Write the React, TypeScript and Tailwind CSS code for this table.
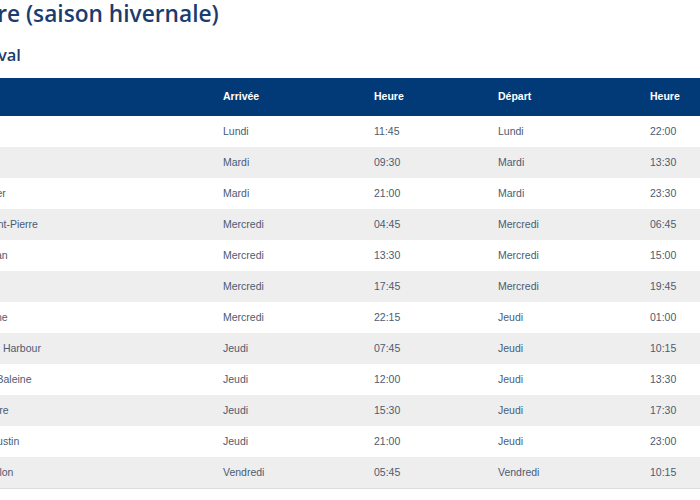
import React from "react";

const rows: [string, string, string, string, string][] = [
  ["Rimouski", "Lundi", "11:45", "Lundi", "22:00"],
  ["Sept-Îles", "Mardi", "09:30", "Mardi", "13:30"],
  ["Port-Menier", "Mardi", "21:00", "Mardi", "23:30"],
  ["Havre-Saint-Pierre", "Mercredi", "04:45", "Mercredi", "06:45"],
  ["Natashquan", "Mercredi", "13:30", "Mercredi", "15:00"],
  ["Kegaska", "Mercredi", "17:45", "Mercredi", "19:45"],
  ["La Romaine", "Mercredi", "22:15", "Jeudi", "01:00"],
  ["Harrington Harbour", "Jeudi", "07:45", "Jeudi", "10:15"],
  ["Tête-à-la-Baleine", "Jeudi", "12:00", "Jeudi", "13:30"],
  ["La Tabatière", "Jeudi", "15:30", "Jeudi", "17:30"],
  ["Saint-Augustin", "Jeudi", "21:00", "Jeudi", "23:00"],
  ["Blanc-Sablon", "Vendredi", "05:45", "Vendredi", "10:15"],
];

const cols = "grid grid-cols-[272px_151px_124px_152px_110px]";

export default function App() {
  return (
    <div className="w-[700px] h-[500px] overflow-hidden bg-white">
      <div className="-ml-[49px] w-[809px]">
        <h1
          className="text-[22.7px] leading-[28px] font-semibold text-[#1b3c6e] -ml-[14px]"
          style={{ fontFamily: '"Open Sans", sans-serif' }}
        >
          Horaire (saison hivernale)
        </h1>
        <h2
          className="mt-[16px] text-[16.5px] leading-[22px] font-semibold text-[#1b3c6e] -ml-[4px]"
          style={{ fontFamily: '"Open Sans", sans-serif' }}
        >
          Sens aval
        </h2>
        <div
          className="mt-[12px] text-[10.5px]"
          style={{ fontFamily: '"Liberation Sans", Arial, sans-serif' }}
        >
          <div className={`${cols} h-[38px] items-center bg-[#023a78] text-white font-bold`}>
            <div>Escale</div>
            <div>Arrivée</div>
            <div>Heure</div>
            <div>Départ</div>
            <div>Heure</div>
          </div>
          {rows.map((r, i) => (
            <div
              key={i}
              className={`${cols} h-[31px] items-center pt-px text-[#4a5c72] ${
                i % 2 === 1 ? "bg-[#eeeeee]" : "bg-white"
              }`}
            >
              {r.map((c, j) => (
                <div key={j}>{c}</div>
              ))}
            </div>
          ))}
          <div className="h-px bg-[#dddddd]" />
        </div>
      </div>
    </div>
  );
}
